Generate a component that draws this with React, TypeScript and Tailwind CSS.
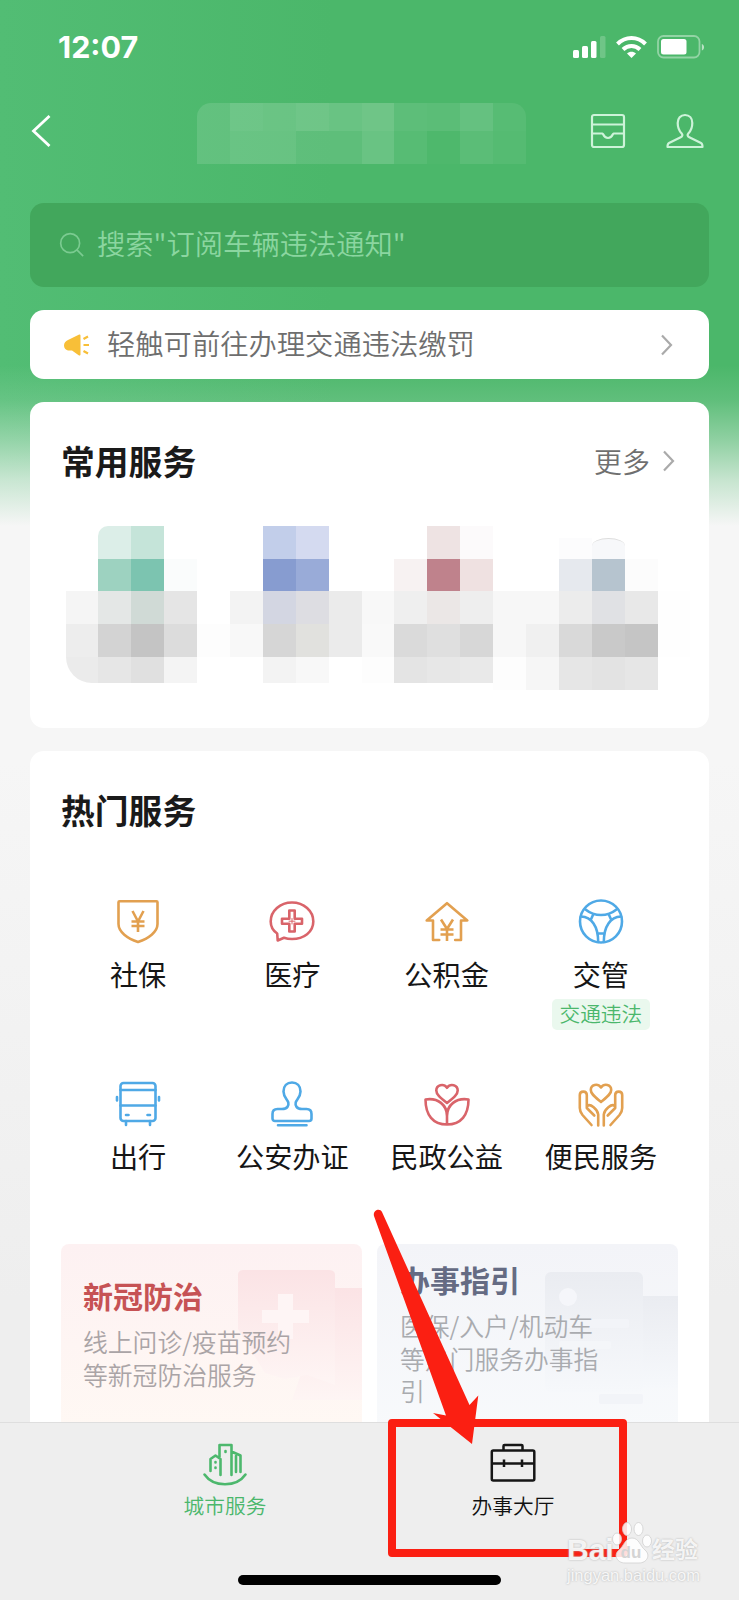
import type { ReactNode } from "react";

const W = "#ffffff";
const MOSAIC: string[][] = [
  [W, "#dceee8", "#c5e4d9", W, W, W, "#c2ceea", "#d4daf0", W, W, W, "#eee3e3", "#fcfafb", W, W, "#fcfcfd", "#f7f8fa", W, W],
  [W, "#9dd2c0", "#7cc4b0", "#fafcfc", W, W, "#879cd0", "#99abd8", W, W, "#f7f2f2", "#bf828c", "#efe1e1", W, W, "#e6e9ee", "#b6c4cf", "#fcfcfc", W],
  ["#f5f5f5", "#e4e7e6", "#d0dad6", "#e5e5e5", W, "#f3f3f3", "#d3d6e2", "#dddde2", "#ebebeb", "#f8f8f8", "#efefef", "#ebe7e6", "#eeeeee", "#f7f7f7", "#f7f7f7", "#ececec", "#e0e1e4", "#e8e8e8", "#fefefe"],
  ["#ededed", "#d3d3d3", "#c4c4c4", "#dcdcdc", "#fdfdfd", "#f8f8f8", "#d6d6d6", "#e1e1de", "#ebebeb", "#f9f9f9", "#dadada", "#dfdfdf", "#d7d7d7", "#f7f7f7", "#f0f0f0", "#d9d9d9", "#c9c9c9", "#c5c5c5", "#fefefe"],
  ["#ebebeb", "#e6e6e6", "#e0e0e0", "#f4f4f4", W, W, "#f3f3f3", "#f8f8f8", W, "#fdfdfd", "#e4e4e4", "#e7e7e7", "#e9e9e9", "#fdfdfd", "#f6f6f6", "#e6e6e6", "#e3e3e3", "#e6e6e6", W],
];

const TITLE_TOP = [0.12, 0.19, 0.17, 0.2, 0.17, 0.2, 0.1, 0.09, 0.15, 0.07];
const TITLE_BOTTOM = [0.12, 0.16, 0.16, 0.11, 0.11, 0.17, 0.07, 0.02, 0.09, 0.06];

function Icon({ color, children, size = 48 }: { color: string; children: ReactNode; size?: number }) {
  return (
    <svg width={size} height={size} viewBox="0 0 48 48" fill="none" stroke={color} strokeWidth="2.6" strokeLinejoin="round" strokeLinecap="round">
      {children}
    </svg>
  );
}

const ORANGE = "#e2a050";
const RED = "#d9646a";
const BLUE = "#4fa9e6";

const SERVICES: { label: string; tag?: string; icon: ReactNode }[] = [
  {
    label: "社保",
    icon: (
      <Icon color={ORANGE}>
        <path d="M5.500 4.200h37c.6 0 1 .4 1 1V27c0 8-9 14.500-19.500 18C13.500 41.500 4.500 35 4.500 27V5.200c0-.6.4-1 1-1Z" />
        <path d="m18.500 14 5.500 10.500L29.500 14M24 24.500V35M17.500 24.500h13M17.500 29h13" strokeLinecap="butt" />
      </Icon>
    ),
  },
  {
    label: "医疗",
    icon: (
      <Icon color={RED}>
        <path d="M9.200 36.500C4.700 33.500 2.700 29 2.700 24.500 2.700 14 12.200 5.500 24 5.500s21.300 8.500 21.300 19S35.800 42 24 42c-3 0-5.500-.4-8-1.300L9.700 43.500Z" />
        <path d="M21.300 13.500h5.400v8.300H34v5h-7.300V34.500h-5.400v-7.700H14v-5h7.300Z" />
        <path d="M24 21.500v5.500M21 24.200h6" strokeWidth="1" />
      </Icon>
    ),
  },
  {
    label: "公积金",
    icon: (
      <Icon color={ORANGE}>
        <path d="M16.200 43H10V23.500H3.700L24 6.200l20.300 17.300H38V43h-5.800" />
        <path d="m18 22.500 6 9.500 6-9.500M24 32v12M17.500 32.500h13M17.500 37.500h13" strokeLinecap="butt" />
      </Icon>
    ),
  },
  {
    label: "交管",
    tag: "交通违法",
    icon: (
      <Icon color={BLUE}>
        <circle cx="24" cy="24.500" r="21" />
        <path d="M8.500 12.500c5 4 10 5.500 15.500 5.500s10.500-1.500 15.500-5.500M4 19.500c10.500.5 17.200 9.500 17.200 25.500M44 19.500C33.500 20 26.800 29 26.800 45M20.500 36.500h7M16.300 17.200l-2.500 5.500M31.700 17.200l2.500 5.500" />
      </Icon>
    ),
  },
  {
    label: "出行",
    icon: (
      <Icon color={BLUE}>
        <rect x="6.500" y="4" width="35" height="38" rx="3" />
        <path d="M6.500 11h35M6.500 26.500h35M12 36h2.500M33.500 36H36M12 42v4M36 42v4M3 18v3.500M45 18v3.500" />
      </Icon>
    ),
  },
  {
    label: "公安办证",
    icon: (
      <Icon color={BLUE}>
        <path d="M20.300 23.500c-.8-3-4.800-5.500-4.800-11C15.500 7 19 3.500 24 3.500s8.500 3.500 8.500 9c0 5.500-4 8-4.800 11-.7 3 .8 6.500 6.300 6.500h4.500c3.500 0 5 2 5 5v4.500c0 1.500-1 2.500-2.500 2.500H7c-1.500 0-2.500-1-2.500-2.500V35c0-3 1.500-5 5-5H14c5.500 0 7-3.500 6.300-6.500ZM10 46.300h28.500" />
      </Icon>
    ),
  },
  {
    label: "民政公益",
    icon: (
      <Icon color={RED}>
        <path d="M24 45.500C10 45.500 2.500 36 2.500 20.500 15 18.500 24 26 24 37c0-11 9-18.500 21.500-16.500C45.500 36 38 45.500 24 45.500ZM24 37v8.500M24 24C17 18.500 13.300 15.500 13.300 11.500c0-5.500 7.200-7.500 10.700-2.700 3.500-4.800 10.700-2.800 10.700 2.700C34.700 15.500 31 18.500 24 24Z" />
      </Icon>
    ),
  },
  {
    label: "便民服务",
    icon: (
      <Icon color={ORANGE}>
        <path d="M24 23C17.500 17.500 13.800 14.800 13.800 11c0-5.500 6.900-7 10.200-2.500C27.300 4 34.200 5.500 34.200 11c0 3.800-3.700 6.500-10.200 12Z" />
        <path d="M14.500 46 5.500 36C3.500 33.500 2.800 32 2.800 29V16c0-4.500 7-4.500 7 0v13l7.500 7.500M10.500 27c2.500-3 10.300 3.500 10.700 8.500v11M33.500 46l9-10c2-2.500 2.700-4 2.700-7V16c0-4.500-7-4.500-7 0v13l-7.500 7.500M37.500 27c-2.500-3-10.300 3.500-10.700 8.500v11" />
      </Icon>
    ),
  },
];

function Chevron({ className }: { className: string }) {
  return (
    <svg className={className} width="12" height="22" viewBox="0 0 12 22" fill="none" stroke="#aaaaaa" strokeWidth="2.200">
      <path d="m1 1.500 9 9.500L1 20.500" />
    </svg>
  );
}

function StatusBar() {
  return (
    <div className="flex h-[94px] items-center justify-between pr-[34px] pl-[58px] text-white">
      <span className="font-[Inter] text-[30.500px] leading-none font-bold">12:07</span>
      <svg width="133" height="24" viewBox="0 0 133 24">
        <g fill="#fff">
          <rect x="1" y="15" width="6" height="8" rx="1.500" />
          <rect x="10" y="11" width="6" height="12" rx="1.500" />
          <rect x="19" y="6" width="5.500" height="17" rx="1.500" />
          <rect x="28" y="1" width="5.500" height="22" rx="1.500" opacity=".2" />
          <rect x="89" y="4" width="25.500" height="15.500" rx="2.500" />
          <path d="M129.800 9v6.500c3-1 3-5.500 0-6.500Z" opacity=".6" />
          <path d="M59.500 23 55 18.500c2.500-2.200 6.500-2.200 9 0Z" />
        </g>
        <rect x="86" y="1" width="41.500" height="21.500" rx="5.500" fill="none" stroke="#fff" strokeWidth="1.800" opacity=".4" />
        <path d="M45.500 9c8-8 20-8 28 0M51 14.500c5-4.700 12-4.700 17 0" fill="none" stroke="#fff" strokeWidth="4" />
      </svg>
    </div>
  );
}

function TitleBar() {
  return (
    <div className="flex h-[109px] items-start">
      <svg className="mt-[21px] ml-[31px]" width="20" height="32" viewBox="0 0 20 32" fill="none" stroke="#fff" strokeWidth="2.800">
        <path d="M18.500 1 2.500 16l16 15" />
      </svg>
      <div className="mt-[9px] ml-[146px] grid w-[329px] grid-cols-10 grid-rows-[28px_33px] overflow-hidden rounded-t-[14px]">
        {[...TITLE_TOP, ...TITLE_BOTTOM].map((o, i) => (
          <div key={i} style={{ backgroundColor: `rgba(255,255,255,${o})` }} />
        ))}
      </div>
      <svg className="mt-[19px] ml-[64px]" width="36" height="36" viewBox="0 0 36 36" fill="none" stroke="#cdf3d9" strokeWidth="2.200">
        <rect x="2" y="2" width="32" height="32" rx="2" />
        <path d="M2 11.500h32M2 20.500h10.500c1 0 .8 4.500 5.500 4.500s4.500-4.500 5.500-4.500H34" />
      </svg>
      <svg className="mt-[19px] ml-[40px]" width="38" height="36" viewBox="0 0 38 36" fill="none" stroke="#cdf3d9" strokeWidth="2.200" strokeLinejoin="round">
        <path d="M19 2c-4.500 0-7.300 3.300-7.300 8 0 4.500 1.500 8 4 10.500 1.200 1.300.8 3-1 3.800L3 30c-1.200.6-1.500 1.500-1.500 4h35c0-2.500-.3-3.400-1.500-4l-11.700-5.700c-1.800-.8-2.200-2.500-1-3.800 2.500-2.500 4-6 4-10.500C26.300 5.300 23.500 2 19 2Z" />
      </svg>
    </div>
  );
}

function SearchBox() {
  return (
    <div className="mx-[30px] flex h-[84px] items-center rounded-[14px] bg-[#42a75c] pl-[29px] text-[#8bd6a0]">
      <svg width="26" height="26" viewBox="0 0 28 28" fill="none" stroke="#7bcb91" strokeWidth="1.800">
        <circle cx="12" cy="12" r="10.200" />
        <path d="m19 19 7 7" />
      </svg>
      <span className="ml-[12px] pb-[3px] text-[28.300px] leading-none font-[350]">搜索"订阅车辆违法通知"</span>
    </div>
  );
}

function Notice() {
  return (
    <div className="mx-[30px] mt-[23px] flex h-[69px] items-center rounded-[14px] bg-white pl-[33px]">
      <svg width="27" height="24" viewBox="0 0 27 24" fill="#f8bf38">
        <path d="M17.500 2.500v19c0 1-1 1.300-1.800.8L9 17.500H5C2.500 17 1 15 1 12.500s1.500-4.500 4-5.500l10.700-5.300c1-.4 1.800-.2 1.800.8Z" />
        <path d="m20.500 6 4.500-2.500M20.500 12H26M20.500 18 25 20.500" stroke="#f8bf38" strokeWidth="2.200" />
      </svg>
      <span className="ml-[17px] pb-[2px] text-[28.300px] leading-none font-[350] whitespace-nowrap text-[#6e6e6e]">轻触可前往办理交通违法缴罚</span>
      <Chevron className="mr-[36px] ml-auto" />
    </div>
  );
}

function CommonServices() {
  return (
    <section className="mx-[30px] mt-[23px] h-[326px] rounded-[14px] bg-white">
      <div className="flex h-[124px] items-center pr-[34px] pb-[7px] pl-[31px]">
        <h2 className="text-[33.800px] leading-none font-bold text-[#1a1a1a]">常用服务</h2>
        <span className="ml-auto text-[28px] leading-none font-[350] text-[#6f6f6f]">更多</span>
        <Chevron className="ml-[13px]" />
      </div>
      <div className="ml-[35.500px] grid w-[625.100px] grid-cols-[repeat(19,32.900px)] grid-rows-[33px_32px_33px_33px_33px]">
        {MOSAIC.flatMap((row, r) =>
          row.map((color, c) => (
            <div
              key={`${r}-${c}`}
              className={
                r === 4 && c === 0
                  ? "h-[26px] rounded-bl-[30px]"
                  : r === 4 && c < 13
                    ? "h-[26px]"
                    : r === 0 && c === 1
                      ? "rounded-tl-[10px]"
                      : r === 0 && c === 15
                        ? "mt-[12px]"
                        : r === 0 && c === 16
                          ? "mt-[12px] rounded-t-[50%_8px] border-t border-[#dddddd]"
                          : ""
              }
              style={{ backgroundColor: color }}
            />
          )),
        )}
      </div>
    </section>
  );
}

function Banners() {
  return (
    <div className="mt-[45px] grid grid-cols-2 gap-[15px] px-[31px]">
      <div className="relative h-[200px] overflow-hidden rounded-t-[8px] bg-linear-to-b from-[#fdf1f2] to-[#fff9f4] pt-[35px] pl-[22px]">
        <svg className="absolute top-0 left-0" width="301" height="200" viewBox="0 0 301 200">
          <defs>
            <linearGradient id="rg" x1="0" y1="0" x2="0" y2="1">
              <stop offset="0" stopColor="#fbe3e5" />
              <stop offset="1" stopColor="#fef5f4" />
            </linearGradient>
          </defs>
          <path d="M270 44h31v112h-70Z" fill="url(#rg)" />
          <path d="M182 26h86c4 0 6 2 6 5v110l-28-10-22 4-20-6-27-44V31c0-3 2-5 5-5Z" fill="url(#rg)" />
          <path d="M217 50h15v16h16v13h-16v16h-15V79h-16V66h16Z" fill="#fef5f5" />
        </svg>
        <h3 className="relative text-[30px] leading-[32px] font-bold text-[#c65254]">新冠防治</h3>
        <p className="relative mt-[14px] w-[230px] text-[24.800px] leading-[32.500px] font-[350] text-[#aaa4a6]">
          线上问诊/疫苗预约
          <br />
          等新冠防治服务
        </p>
      </div>
      <div className="relative h-[200px] overflow-hidden rounded-t-[8px] bg-linear-to-b from-[#f3f4f8] to-[#f8fafc] pt-[19px] pl-[23px]">
        <svg className="absolute top-0 left-0" width="301" height="200" viewBox="0 0 301 200">
          <defs>
            <linearGradient id="gg" x1="0" y1="0" x2="0" y2="1">
              <stop offset="0" stopColor="#eaecf1" />
              <stop offset="1" stopColor="#f6f8fb" />
            </linearGradient>
          </defs>
          <path d="M264 52h37v92h-37Z" fill="url(#gg)" />
          <rect x="168" y="28" width="98" height="120" rx="6" fill="url(#gg)" />
          <rect x="222" y="150" width="44" height="10" rx="2" fill="#f2f4f8" />
          <circle cx="191" cy="53" r="9" fill="#f5f6fa" />
          <rect x="182" y="75" width="70" height="9" rx="2" fill="#f2f4f8" />
          <rect x="182" y="97" width="52" height="8" rx="2" fill="#f4f6f9" />
        </svg>
        <h3 className="relative text-[30px] leading-[32px] font-bold text-[#656b83]">办事指引</h3>
        <p className="relative mt-[14px] text-[24.800px] leading-[32.500px] font-[350] text-[#a9abaf]">
          医保/入户/机动车
          <br />
          等热门服务办事指
          <br />引
        </p>
      </div>
    </div>
  );
}

function HotServices() {
  return (
    <section className="mx-[30px] mt-[23px] rounded-t-[14px] bg-white">
      <h2 className="pt-[42px] pl-[31px] text-[33.800px] leading-[34px] font-bold text-[#1a1a1a]">热门服务</h2>
      <div className="mt-[70px] ml-[31px] grid w-[617px] grid-cols-4 grid-rows-[182px_120px]">
        {SERVICES.map((s) => (
          <div key={s.label} className="flex flex-col items-center">
            {s.icon}
            <span className="mt-[14px] text-[28.200px] leading-[30px] text-[#161616]">{s.label}</span>
            {s.tag && (
              <span className="mt-[10px] flex h-[31px] w-[98px] items-center justify-center rounded-[5px] bg-[#eaf8ee] pb-[2px] text-[20.700px] leading-none font-[350] text-[#4bb76c]">
                {s.tag}
              </span>
            )}
          </div>
        ))}
      </div>
      <Banners />
    </section>
  );
}

function TabBar() {
  return (
    <nav className="h-[178px] border-t border-[#dedede] bg-[#eeeeee]">
      <div className="flex h-[152px] pl-[81px]">
        <div className="flex w-[288px] flex-col items-center pt-[19px]">
          <svg width="46" height="44" viewBox="0 0 46 44" fill="none" stroke="#4db86d" strokeWidth="2.600" strokeLinejoin="round" strokeLinecap="round">
            <path d="M2.500 32.500c9 13 32 13 41 0M8.500 29V17l5-3.500 5 3.500v16M17.500 15V3h12v30M29.500 9.500l9 4V30M34 30V14" />
            <path d="M23.500 9v1M13.500 20v.5M13.500 25.500V26" />
          </svg>
          <span className="mt-[8px] text-[20.700px] leading-[22px] font-[350] text-[#4bb76c]">城市服务</span>
        </div>
        <div className="flex w-[288px] flex-col items-center pt-[19px]">
          <svg width="46" height="44" viewBox="0 0 46 44" fill="none" stroke="#161616" strokeWidth="2.500" strokeLinejoin="round">
            <rect x="1.800" y="8.500" width="42.500" height="30" rx="1.500" />
            <path d="M13.500 8V4c0-.6.400-1 1-1h17c.6 0 1 .4 1 1v4M1.800 21.500H44M14 17.500V25M32 17.500V25" />
          </svg>
          <span className="mt-[8px] text-[20.700px] leading-[22px] font-[350] text-[#111111]">办事大厅</span>
        </div>
      </div>
      <div className="mx-auto h-[10px] w-[263px] rounded-full bg-black" />
    </nav>
  );
}

function Annotations() {
  return (
    <>
      <div className="absolute top-[1419px] left-[388px] h-[138px] w-[239px] rounded-[4px] border-8 border-[#fb1f12]" />
      <svg className="absolute top-[1205px] left-[370px]" width="112" height="242" viewBox="370 1205 112 242" fill="#fb1f12">
        <path d="M382 1212 469.500 1405l8.800-9.500L472 1444l-39-31 13 2.500L374 1216c-1.500-6 6-8.500 8-4Z" />
      </svg>
    </>
  );
}

function Watermark() {
  return (
    <div className="absolute top-[1518px] left-[567px] w-[136px] font-['Liberation_Sans','Noto_Sans_CJK_SC',sans-serif] text-white/85 [text-shadow:0_0_2px_#aaaaaa]">
      <div className="flex h-[47px] items-end leading-none font-bold">
        <span className="w-[44px] text-[30px] leading-[30px]">Bai</span>
        <span className="relative flex h-[44px] w-[40px] items-end justify-center">
          <svg className="absolute top-0 left-0" width="42" height="44" viewBox="0 0 42 44" fill="#fff" fillOpacity=".85" stroke="#cfcfcf" strokeWidth=".8">
            <ellipse cx="6" cy="18" rx="4.500" ry="6" />
            <ellipse cx="16" cy="8" rx="4.500" ry="6.500" />
            <ellipse cx="27.500" cy="8" rx="4.500" ry="6.500" />
            <ellipse cx="36" cy="20" rx="4.500" ry="6" />
            <path d="M21 17c-7 0-8 8-13 12-6 5-2 13 6 13h14c8 0 12-8 6-13-5-4-6-12-13-12Z" />
          </svg>
          <span className="relative pb-[2px] text-[17px] leading-[20px] text-[#d4d4d4] [text-shadow:none]">du</span>
        </span>
        <span className="ml-[1px] text-[23px] leading-[30px]">经验</span>
      </div>
      <div className="mt-px text-[16.500px] leading-[18px] whitespace-nowrap">jingyan.baidu.com</div>
    </div>
  );
}

export default function App() {
  return (
    <div className="relative h-[1600px] w-[739px] overflow-hidden bg-[linear-gradient(to_bottom,transparent_365px,rgba(246,246,246,.12)_400px,rgba(246,246,246,.4)_440px,rgba(246,246,246,.72)_480px,#f6f6f6_526px,#f6f6f6_760px,#eeeeee_1300px),linear-gradient(to_right,#52bd74,#4bb76a_45%,#4bb76a)] font-['Noto_Sans_CJK_SC',sans-serif]">
      <div className="h-[1422px] overflow-hidden">
        <StatusBar />
        <TitleBar />
        <SearchBox />
        <Notice />
        <CommonServices />
        <HotServices />
      </div>
      <TabBar />
      <Annotations />
      <Watermark />
    </div>
  );
}
